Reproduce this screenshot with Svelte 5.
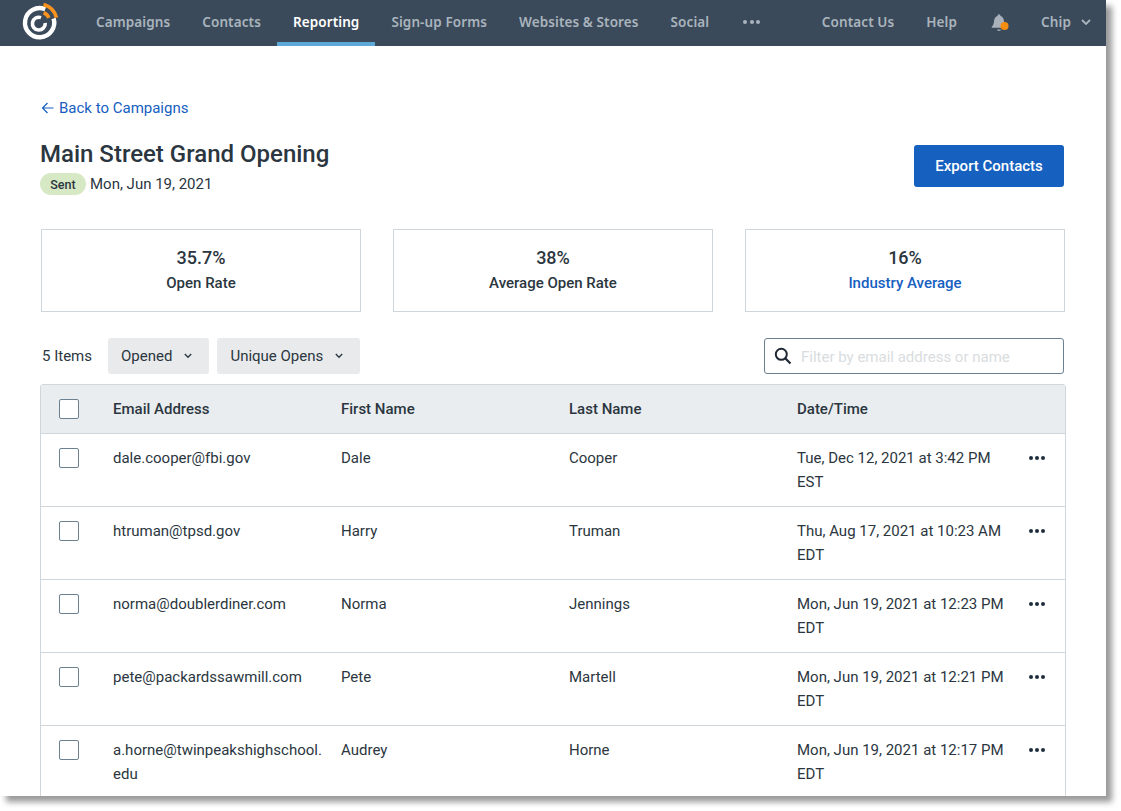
<script>
  const navLeft = ['Campaigns', 'Contacts', 'Reporting', 'Sign-up Forms', 'Websites & Stores', 'Social'];
  const stats = [
    { value: '35.7%', label: 'Open Rate' },
    { value: '38%', label: 'Average Open Rate' },
    { value: '16%', label: 'Industry Average', link: true }
  ];
  const rows = [
    ['dale.cooper@fbi.gov', 'Dale', 'Cooper', 'Tue, Dec 12, 2021 at 3:42 PM EST'],
    ['htruman@tpsd.gov', 'Harry', 'Truman', 'Thu, Aug 17, 2021 at 10:23 AM EDT'],
    ['norma@doublerdiner.com', 'Norma', 'Jennings', 'Mon, Jun 19, 2021 at 12:23 PM EDT'],
    ['pete@packardssawmill.com', 'Pete', 'Martell', 'Mon, Jun 19, 2021 at 12:21 PM EDT'],
    ['a.horne@twinpeakshighschool.edu', 'Audrey', 'Horne', 'Mon, Jun 19, 2021 at 12:17 PM EDT']
  ];
</script>

<div class="frame">
  <header class="nav">
    <div class="logo">
      <svg width="40" height="40" viewBox="0 0 40 40" fill="none">
        <path d="M25.2 6.2 A14.6 14.6 0 1 0 33.6 15.5" stroke="#fff" stroke-width="4.4" />
        <path d="M21 14.6 A6.4 6.4 0 1 0 25.2 20" stroke="#fff" stroke-width="3.6" />
        <path d="M23.5 1.6 A17 17 0 0 1 36.4 14.6" stroke="#f7931e" stroke-width="3.8" />
        <path d="M23.6 9.800 A8.500 8.500 0 0 1 28.800 14.800" stroke="#f7931e" stroke-width="3.600" />
      </svg>
    </div>
    {#each navLeft as item}
      <a class="nav-item" class:active={item === 'Reporting'} href="#top">{item}</a>
    {/each}
    <span class="nav-item more" aria-label="More">
      <i></i><i></i><i></i>
    </span>
    <div class="nav-right">
      <a class="nav-item" href="#top">Contact Us</a>
      <a class="nav-item" href="#top">Help</a>
      <span class="nav-item bell">
        <svg width="20" height="20" viewBox="0 0 20 20">
          <path fill="#a9b2ba" d="M9 1.500h2l.5 1.600c2.400.8 3.300 2.700 3.500 5.200.2 2.600.8 4.200 2.300 5.700v.8H2.700v-.8c1.500-1.500 2.100-3.100 2.300-5.700.2-2.500 1.100-4.400 3.500-5.200z" />
          <path fill="#a9b2ba" d="M8 16.600h4a2 1.400 0 0 1-4 0z" />
          <circle cx="15.500" cy="13" r="4" fill="#f78d0f" />
        </svg>
      </span>
      <a class="nav-item chip" href="#top">Chip
        <svg width="10" height="6" viewBox="0 0 10 6" fill="none"><path d="M1 1l4 4 4-4" stroke="#a9b4bd" stroke-width="1.800" /></svg>
      </a>
    </div>
  </header>

  <main class="main">
    <a class="back" href="#top">
      <svg width="14" height="12" viewBox="0 0 14 12" fill="none"><path d="M12.500 6H1.500M6.500 1l-5 5 5 5" stroke="#1660bf" stroke-width="1.200" /></svg>
      Back to Campaigns
    </a>

    <div class="title-row">
      <div>
        <h1>Main Street Grand Opening</h1>
        <div class="meta"><span class="badge">Sent</span><span>Mon, Jun 19, 2021</span></div>
      </div>
      <button class="export">Export Contacts</button>
    </div>

    <section class="stats">
      {#each stats as s}
        <div class="stat">
          <div class="value">{s.value}</div>
          <div class="label" class:link={s.link}>{s.label}</div>
        </div>
      {/each}
    </section>

    <div class="toolbar">
      <span class="count">5 Items</span>
      <button class="select">Opened
        <svg width="8" height="6" viewBox="0 0 8 6" fill="none"><path d="M.8 1l3.200 3.200L7.200 1" stroke="#2d3a46" stroke-width="1.400" /></svg>
      </button>
      <button class="select">Unique Opens
        <svg width="8" height="6" viewBox="0 0 8 6" fill="none"><path d="M.8 1l3.200 3.200L7.200 1" stroke="#2d3a46" stroke-width="1.400" /></svg>
      </button>
      <label class="search">
        <svg width="18" height="18" viewBox="0 0 18 18" fill="none"><circle cx="7.300" cy="7.300" r="5.500" stroke="#1f2933" stroke-width="2" /><path d="M11.500 11.500l5 5" stroke="#1f2933" stroke-width="2.200" /></svg>
        <input placeholder="Filter by email address or name" />
      </label>
    </div>

    <div class="table">
      <div class="row head">
        <div class="cell check"><span class="box"></span></div>
        <div class="cell col">Email Address</div>
        <div class="cell col">First Name</div>
        <div class="cell col">Last Name</div>
        <div class="cell date">Date/Time</div>
        <div class="cell dots"></div>
      </div>
      {#each rows as r}
        <div class="row">
          <div class="cell check"><span class="box"></span></div>
          <div class="cell col email">{r[0]}</div>
          <div class="cell col">{r[1]}</div>
          <div class="cell col">{r[2]}</div>
          <div class="cell date">{r[3]}</div>
          <div class="cell dots"><i></i><i></i><i></i></div>
        </div>
      {/each}
    </div>
  </main>
</div>

<style>
  :global(body) {
    margin: 0;
    min-height: 811px;
    background: #fff;
    font-family: Roboto, "Liberation Sans", sans-serif;
    color: #2b3640;
  }
  .frame {
    width: 1106px;
    height: 796px;
    overflow: hidden;
    background: #fff;
    box-shadow: 6px 6px 6px rgba(0, 0, 0, 0.4);
  }
  a { text-decoration: none; }

  .nav {
    height: 46px;
    background: #3b4a5a;
    display: flex;
    align-items: stretch;
    font-family: "Noto Sans", sans-serif;
    font-size: 13.500px;
    font-weight: 600;
    letter-spacing: 0.1px;
  }
  .logo {
    width: 80px;
    flex: none;
    display: flex;
    align-items: center;
    padding-left: 20px;
    box-sizing: border-box;
  }
  .nav-item {
    display: flex;
    align-items: center;
    gap: 10px;
    padding: 0 16px 2px;
    color: #a9b4bd;
    white-space: nowrap;
    box-sizing: border-box;
  }
  .nav-item.active {
    color: #fff;
    border-bottom: 4px solid #5ca8d6;
    padding-top: 2px;
    padding-bottom: 0;
  }
  .more { gap: 2.500px; padding-left: 18px; }
  .more i {
    width: 4px;
    height: 4px;
    border-radius: 50%;
    background: #a9b4bd;
  }
  .nav-right {
    margin-left: auto;
    display: flex;
    align-items: stretch;
  }
  .bell { padding: 0 16px; }
  .chip { padding-right: 15px; }

  .main {
    padding: 52px 41px 0 40px;
    font-size: 15px;
    line-height: 24px;
  }
  .back {
    display: flex;
    align-items: center;
    gap: 4px;
    height: 20px;
    color: #1660bf;
    font-size: 15px;
    margin-left: 1px;
  }
  .title-row {
    display: flex;
    justify-content: space-between;
    align-items: flex-start;
    margin-top: 20px;
  }
  h1 {
    margin: 0;
    font-size: 24px;
    line-height: 32px;
    font-weight: 500;
    color: #2b3640;
  }
  .meta {
    display: flex;
    align-items: center;
    gap: 4px;
    margin-top: 2px;
  }
  .badge {
    width: 46px;
    height: 22px;
    border-radius: 11px;
    background: #d7e8c5;
    font-size: 12.500px;
    font-weight: 500;
    line-height: 24px;
    text-align: center;
  }
  .export {
    margin: 7px 1px 0 0;
    width: 150px;
    height: 42px;
    border: 0;
    border-radius: 3px;
    background: #1660bf;
    color: #fff;
    font: 500 15px Roboto, sans-serif;
  }
  .stats {
    display: grid;
    grid-template-columns: repeat(3, 320px);
    gap: 32px;
    margin: 33px 0 0 1px;
  }
  .stat {
    height: 83px;
    box-sizing: border-box;
    border: 1px solid #cfd6dc;
    text-align: center;
    padding-top: 16px;
  }
  .value {
    font-size: 18px;
    font-weight: 500;
    line-height: 24px;
  }
  .label {
    font-size: 15px;
    font-weight: 500;
    line-height: 26px;
  }
  .label.link { color: #1660bf; }

  .toolbar {
    display: flex;
    align-items: center;
    gap: 8px;
    margin-top: 26px;
    height: 36px;
  }
  .count {
    margin: 0 8px 0 2px;
    font-size: 15px;
  }
  .select {
    height: 36px;
    display: flex;
    align-items: center;
    gap: 12px;
    padding: 0 17px 0 13px;
    border: 0;
    border-radius: 3px;
    background: #e9eaeb;
    color: #2b3640;
    font: 400 15px Roboto, sans-serif;
  }
  .search {
    margin-left: auto;
    margin-right: 1px;
    width: 300px;
    height: 36px;
    box-sizing: border-box;
    border: 1px solid #6b8190;
    border-radius: 3px;
    display: flex;
    align-items: center;
    gap: 9px;
    padding-left: 9px;
  }
  .search input {
    flex: 1;
    min-width: 0;
    border: 0;
    outline: 0;
    padding: 2px 0 0;
    background: transparent;
    font: 400 15px Roboto, sans-serif;
  }
  .search input::placeholder { color: #d9dde0; opacity: 1; }

  .table {
    margin: 10px -1px 0 0;
    border: 1px solid #cfd6dc;
    border-radius: 3px 3px 0 0;
  }
  .row {
    display: flex;
    border-top: 1px solid #cfd6dc;
  }
  .row:first-child { border-top: 0; }
  .head {
    height: 48px;
    background: #eaedf0;
    font-weight: 500;
    align-items: center;
  }
  .cell { box-sizing: border-box; }
  .check {
    width: 72px;
    flex: none;
    padding-left: 18px;
    display: flex;
  }
  .row:not(.head) .cell { padding-top: 12px; padding-bottom: 12px; }
  .row:not(.head) .check { padding-top: 14px; }
  .box {
    width: 20px;
    height: 20px;
    box-sizing: border-box;
    border: 1px solid #6b8190;
    border-radius: 2px;
    background: #fff;
  }
  .col {
    width: 228px;
    flex: none;
    padding-right: 16px;
  }
  .email { overflow-wrap: anywhere; }
  .date {
    width: 215px;
    flex: none;
  }
  .dots {
    margin-left: 17px;
    display: flex;
    gap: 2px;
    height: 48px;
    align-items: center;
  }
  .dots i {
    width: 4px;
    height: 4px;
    border-radius: 50%;
    background: #1f2d3d;
  }
</style>
